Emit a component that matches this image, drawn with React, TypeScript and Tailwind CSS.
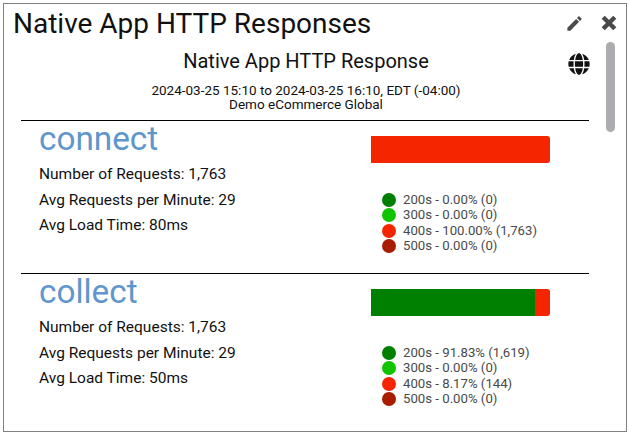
import { FaGlobe } from "react-icons/fa";
import { MdEdit } from "react-icons/md";

const colors = ["bg-[#008000]", "bg-[#10c400]", "bg-[#f52500]", "bg-[#a81c00]"];

const sections = [
  {
    name: "connect",
    requests: "1,763",
    perMinute: "29",
    loadTime: "80ms",
    green: 0,
    legend: ["200s - 0.00% (0)", "300s - 0.00% (0)", "400s - 100.00% (1,763)", "500s - 0.00% (0)"],
  },
  {
    name: "collect",
    requests: "1,763",
    perMinute: "29",
    loadTime: "50ms",
    green: 91.83,
    legend: ["200s - 91.83% (1,619)", "300s - 0.00% (0)", "400s - 8.17% (144)", "500s - 0.00% (0)"],
  },
];

const CloseIcon = () => (
  <svg width="16" height="16" viewBox="0 0 16 16">
    <path d="M2.2 2.2L13.8 13.8M13.8 2.2L2.2 13.8" stroke="currentColor" strokeWidth="4.4" />
  </svg>
);

const Section = ({ s }: { s: (typeof sections)[number] }) => (
  <div className="flex h-[153px] border-t border-black">
    <div className="w-[350px] pl-[18px]">
      <h2 className="text-[33.3px] leading-[36px] text-[#5f96cb] font-normal">{s.name}</h2>
      <div className="mt-[8px] flex flex-col gap-[7px] text-[15.5px] leading-[18.5px] text-[#111]">
        <p>Number of Requests: {s.requests}</p>
        <p>Avg Requests per Minute: {s.perMinute}</p>
        <p>Avg Load Time: {s.loadTime}</p>
      </div>
    </div>
    <div className="pt-[15px]">
      <div className="flex h-[27px] w-[179px] overflow-hidden rounded-r-[3px] bg-[#f52500]">
        {s.green > 0 && <div className="bg-[#008000]" style={{ width: `${s.green}%` }} />}
      </div>
      <ul className="mt-[29px] ml-[11px] flex flex-col text-[13.2px] leading-[15.4px] text-[#4a4a4a]">
        {s.legend.map((t, i) => (
          <li key={t} className="flex items-center gap-[7px]">
            <span className={`size-[14px] rounded-full ${colors[i]}`} />
            {t}
          </li>
        ))}
      </ul>
    </div>
  </div>
);

export default function App() {
  return (
    <div className="h-[434px] w-[629px] bg-white p-[3px] font-['Roboto',sans-serif]">
      <div className="relative h-[429px] w-[624px] overflow-hidden border border-[#808080]">
        <div className="flex h-[38px] items-center justify-between pl-[9px] pr-[9px]">
          <h1 className="mt-[2px] text-[28px] leading-[38px] font-normal text-[#111]">Native App HTTP Responses</h1>
          <div className="flex items-center gap-[17px] text-[#4a4a4a]">
            <MdEdit size={19} />
            <CloseIcon />
          </div>
        </div>
        <div className="relative pl-[17px] pr-[35px]">
          <h2 className="mt-[5px] text-center text-[20px] leading-[28px] font-normal text-[#111]">Native App HTTP Response</h2>
          <div className="absolute right-[36px] top-[6px] text-[#111]">
            <FaGlobe size={22} />
          </div>
          <p className="mt-[8px] text-center text-[13.5px] leading-[14px] text-[#111]">
            2024-03-25 15:10 to 2024-03-25 16:10, EDT (-04:00)
            <br />
            Demo eCommerce Global
          </p>
          <div className="mt-[9px] w-[568px]">
            {sections.map((s) => (
              <Section key={s.name} s={s} />
            ))}
          </div>
        </div>
        <div className="absolute right-[11px] top-[38px] h-[90px] w-[9px] rounded-full bg-[#adadb0]" />
      </div>
    </div>
  );
}
